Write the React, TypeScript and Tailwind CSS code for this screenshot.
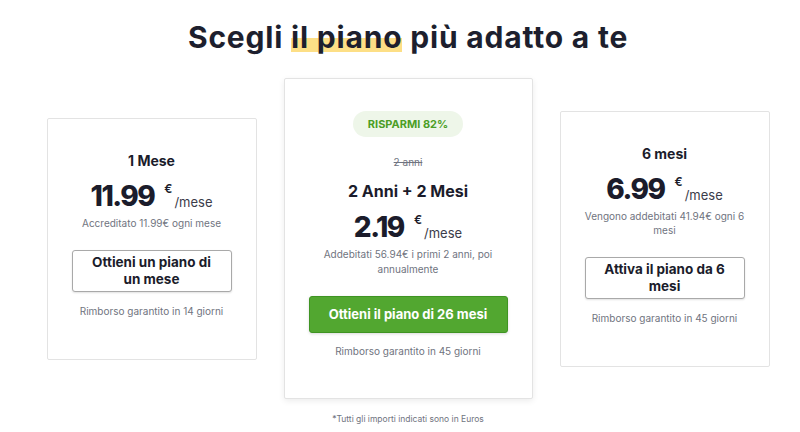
import React from 'react';

const font = { fontFamily: 'Inter, "Noto Sans", sans-serif' };

type Plan = {
  title: string;
  price: string;
  note: string;
  cta: string;
  refund: string;
};

const sidePlans: Plan[] = [
  {
    title: '1 Mese',
    price: '11.99',
    note: 'Accreditato 11.99€ ogni mese',
    cta: 'Ottieni un piano di un mese',
    refund: 'Rimborso garantito in 14 giorni',
  },
  {
    title: '6 mesi',
    price: '6.99',
    note: 'Vengono addebitati 41.94€ ogni 6 mesi',
    cta: 'Attiva il piano da 6 mesi',
    refund: 'Rimborso garantito in 45 giorni',
  },
];

const Price = ({ value }: { value: string }) => (
  <div className="flex items-start justify-center text-[#1b1c2b]">
    <span className="text-[28px] font-extrabold leading-[34px] tracking-[-1.5px]">{value}</span>
    <span className="ml-[10px] mt-[2px] text-[12px] font-semibold leading-[16px]">€</span>
    <span className="ml-0.5 mt-[14px] text-[13px] leading-[18px] text-[#3b3c4a]">/mese</span>
  </div>
);

const SideCard = ({ plan }: { plan: Plan }) => (
  <div className="w-[210px] rounded-[2px] border border-[#e3e3e3] bg-white px-6 pt-[33px] pb-[41px] text-center">
    <h3 className="text-[14px] font-bold leading-[18px] text-[#1b1c2b]">{plan.title}</h3>
    <div className="mt-[9px]">
      <Price value={plan.price} />
    </div>
    <p className="mt-[3px] text-[10px] leading-[14px] text-[#707480]">{plan.note}</p>
    <button className="mt-[20px] w-full rounded-[3px] border border-[#a9a9a9] bg-white px-3 py-[3px] text-[13.5px] font-bold leading-[17px] text-[#1b1c2b] shadow-[0_1px_2px_rgba(0,0,0,0.12)]">
      {plan.cta}
    </button>
    <p className="mt-[12px] text-[10px] leading-[14px] text-[#707480]">{plan.refund}</p>
  </div>
);

const App = () => {
  return (
    <div className="flex min-h-[432px] w-[800px] flex-col items-center bg-white pl-4 pt-[18px]" style={font}>
      <h1 className="text-[30px] font-bold leading-[38px] tracking-[0.8px] text-[#1d1f2e]">
        Scegli{' '}
        <span className="bg-[linear-gradient(to_bottom,transparent_53%,#fddf86_53%,#fddf86_92%,transparent_92%)]">
          il piano
        </span>{' '}
        più adatto a te
      </h1>

      <div className="mt-[22px] flex items-center gap-[27px]">
        <SideCard plan={sidePlans[0]} />

        <div className="w-[249px] rounded-[2px] border border-[#e3e3e3] bg-white px-6 pt-[32px] pb-[40px] text-center shadow-[0_2px_6px_rgba(0,0,0,0.08)]">
          <div className="flex justify-center">
            <span className="rounded-full bg-[#eef6e9] px-[15px] py-[6px] text-[11px] font-bold leading-[14px] text-[#4b9e26]">
              RISPARMI 82%
            </span>
          </div>
          <p className="mt-[18px] text-[10px] leading-[14px] text-[#707480] line-through">2 anni</p>
          <h3 className="mt-[12px] text-[16px] font-bold leading-[20px] text-[#1b1c2b]">2 Anni + 2 Mesi</h3>
          <div className="mt-[9px]">
            <Price value="2.19" />
          </div>
          <p className="mt-[3px] text-[10px] leading-[15px] text-[#707480]">
            Addebitati 56.94€ i primi 2 anni, poi annualmente
          </p>
          <button className="mt-[19px] w-full rounded-[3px] border border-[#3f9423] bg-[#52a730] py-[9px] text-[13px] font-bold leading-[17px] text-white shadow-[0_1px_3px_rgba(0,0,0,0.15)]">
            Ottieni il piano di 26 mesi
          </button>
          <p className="mt-[11px] text-[10px] leading-[14px] text-[#707480]">Rimborso garantito in 45 giorni</p>
        </div>

        <SideCard plan={sidePlans[1]} />
      </div>

      <p className="mt-[14px] text-[8.5px] leading-[12px] text-[#707480]">*Tutti gli importi indicati sono in Euros</p>
    </div>
  );
};

export default App;
